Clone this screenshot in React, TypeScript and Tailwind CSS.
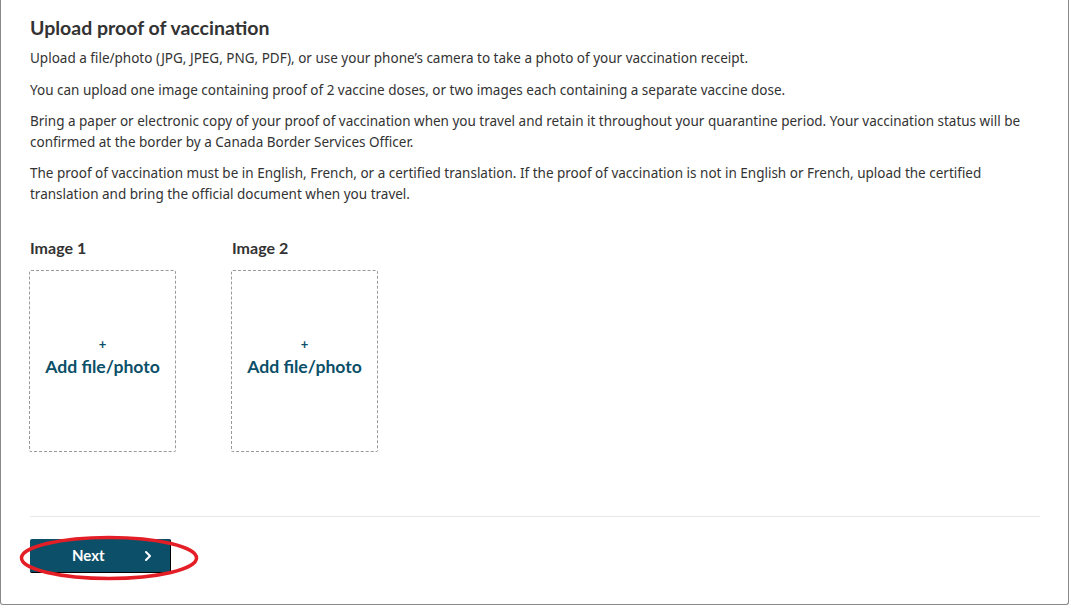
import { ChevronRight } from "lucide-react";

const paragraphs = [
  "Upload a file/photo (JPG, JPEG, PNG, PDF), or use your phone’s camera to take a photo of your vaccination receipt.",
  "You can upload one image containing proof of 2 vaccine doses, or two images each containing a separate vaccine dose.",
  "Bring a paper or electronic copy of your proof of vaccination when you travel and retain it throughout your quarantine period. Your vaccination status will be confirmed at the border by a Canada Border Services Officer.",
  "The proof of vaccination must be in English, French, or a certified translation. If the proof of vaccination is not in English or French, upload the certified translation and bring the official document when you travel.",
];

const UploadBox = ({ label }: { label: string }) => {
  return (
    <div className="flex flex-col">
      <span className="font-['Lato'] text-[16px] font-bold text-[#333] leading-[20px] pl-[1px]">
        {label}
      </span>
      <button className="mt-[12px] flex h-[182px] w-[147px] flex-col items-center justify-center border border-dashed border-[#999] rounded-[2px] pb-[7px] font-['Lato'] font-bold text-[#0b4f68]">
        <span className="text-[13px] leading-[16px]">+</span>
        <span className="mt-[3px] text-[17.6px] leading-[24px]">Add file/photo</span>
      </button>
    </div>
  );
};

export default function App() {
  return (
    <div className="h-[608px] w-[1071px] bg-white">
      <div className="relative h-[605px] w-[1069px] border border-t-0 border-[#8a8a8a] rounded-b-[3px] px-[28px] pt-[15px]">
        <h2 className="font-['Lato'] text-[19.5px] font-bold text-[#333] leading-[26px] pl-[1px]">
          Upload proof of vaccination
        </h2>
        <div className="mt-[7px] font-['Noto_Sans'] text-[13.5px] text-[#333] leading-[20.5px] pl-[1px]">
          {paragraphs.map((p) => (
            <p key={p} className="mb-[11px] pr-[10px]">
              {p}
            </p>
          ))}
        </div>

        <div className="mt-[34px] flex gap-[55px]">
          <UploadBox label="Image 1" />
          <UploadBox label="Image 2" />
        </div>

        <hr className="mt-[64px] ml-[1px] border-t border-[#e8e8e8]" />

        <div className="mt-[22px] flex pl-[1px]">
          <button className="flex h-[34px] w-[141px] items-center rounded-[2px] bg-[#0b5068] border-r border-b border-black pl-[42px] pr-[14px] font-['Lato'] text-[15px] font-bold text-white">
            <span>Next</span>
            <ChevronRight className="ml-auto h-[16px] w-[16px]" strokeWidth={3} />
          </button>
        </div>

        {/* red annotation ellipse */}
        <svg
          className="pointer-events-none absolute left-[18px] top-[534px]"
          width="182"
          height="48"
          viewBox="0 0 182 48"
        >
          <ellipse cx="90" cy="24" rx="87.5" ry="20.5" fill="none" stroke="#e41e26" strokeWidth="3.5" />
        </svg>
      </div>
    </div>
  );
}
